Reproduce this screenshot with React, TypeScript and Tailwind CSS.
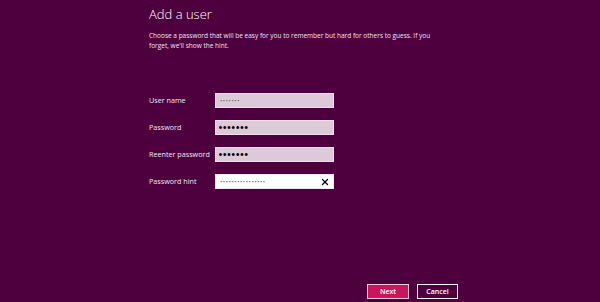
import { X } from "lucide-react";

const rows = [
  { label: "User name", value: "•••••••", kind: "small" },
  { label: "Password", value: "•••••••", kind: "dots" },
  { label: "Reenter password", value: "•••••••", kind: "dots" },
  { label: "Password hint", value: "••••••••••••••••", kind: "hint" },
];

const App = () => {
  return (
    <div className="w-full h-[302px] bg-[#4e003e] text-white flex flex-col font-['Open_Sans',sans-serif]">
      <div className="ml-[149px] w-[309px] flex flex-col h-full">
        <h1 className="text-[13px] font-light leading-none mt-[8px]">Add a user</h1>
        <p className="text-[6.5px] leading-[9.5px] mt-[10px] w-[290px] text-[#f0e4ee]">
          Choose a password that will be easy for you to remember but hard for others to guess. If you forget, we'll show the hint.
        </p>

        <div className="flex flex-col gap-[12px] mt-[43px]">
          {rows.map((r) => (
            <div key={r.label} className="flex items-center h-[15px]">
              <span className="w-[66px] text-[7.2px] text-[#f3e7f0]">{r.label}</span>
              {r.kind === "hint" ? (
                <div className="w-[119px] h-[15px] bg-white border border-[#f4e6f1] flex items-center justify-between pl-[4px] pr-[3px]">
                  <span className="text-[6px] text-[#666] tracking-[0.6px] leading-none">{r.value}</span>
                  <X className="w-[10px] h-[10px] text-black" strokeWidth={3} />
                </div>
              ) : (
                <div className="w-[119px] h-[15px] bg-[#dccad8] border border-[#f0dfec] flex items-center pl-[2px]">
                  {r.kind === "dots" ? (
                    <span className="text-[13px] text-black tracking-[-0.6px] leading-none">{r.value}</span>
                  ) : (
                    <span className="pl-[2px] text-[6px] text-[#666] tracking-[0.6px] leading-none">{r.value}</span>
                  )}
                </div>
              )}
            </div>
          ))}
        </div>

        <div className="mt-auto mb-[3px] flex justify-end gap-[8px]">
          <button className="w-[42px] h-[15px] bg-[#c8155c] border border-[#f0c8da] text-[7px] font-semibold leading-none">
            Next
          </button>
          <button className="w-[41px] h-[15px] border border-white text-[7px] font-semibold leading-none">
            Cancel
          </button>
        </div>
      </div>
    </div>
  );
};

export default App;
